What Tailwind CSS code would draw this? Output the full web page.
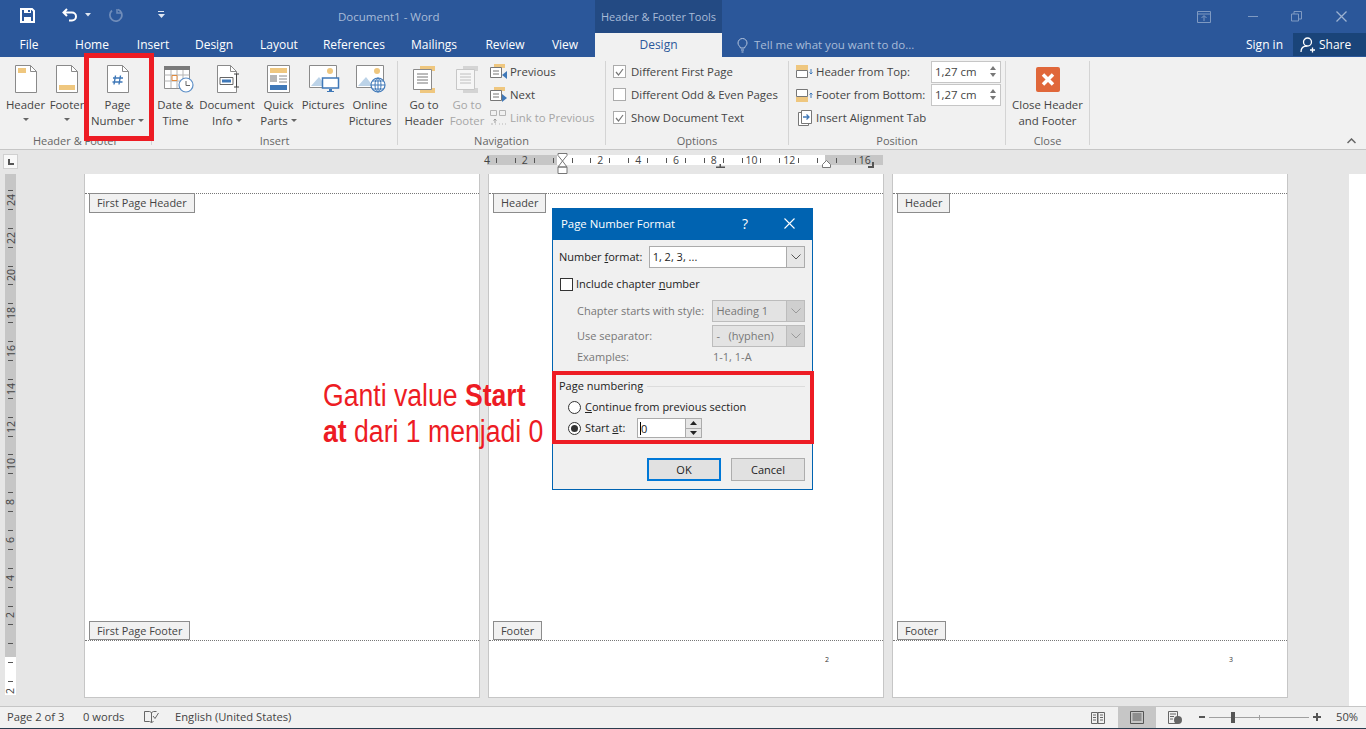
<!DOCTYPE html>
<html><head><meta charset="utf-8"><script src="https://cdn.jsdelivr.net/npm/@tailwindcss/browser@4"></script></head>
<body class="m-0 overflow-hidden">
<div class="relative w-[1366px] h-[729px] overflow-hidden flex flex-col bg-[#e6e6e6] font-['Open_Sans','Noto_Sans',sans-serif] text-[11.4px] leading-[16px] text-[#444]">

<!-- title bar -->
<div class="h-[33px] shrink-0 bg-[#2b579a] flex items-stretch text-[#a9bcd8]">
  <div class="w-[595px] flex items-center">
    <svg class="ml-[20px] mt-[-3px]" width="15" height="15" viewBox="0 0 15 15"><path d="M1 1h11l2 2v11H1z" fill="none" stroke="#fff" stroke-width="2"/><path d="M4 1h7v4H4zM4 9h7v5H4z" fill="#fff"/><path d="M8 2h2v2H8z" fill="#2b579a"/></svg>
    <svg class="ml-[27px] mt-[-3px]" width="17" height="14" viewBox="0 0 17 14"><path d="M5 1 1.500 4.500 5 8M2 4.500h8a4 4 0 0 1 4 4v0a4 4 0 0 1-4 4H7" fill="none" stroke="#fff" stroke-width="2"/></svg>
    <svg class="ml-[6px] mt-[-3px]" width="6" height="4" viewBox="0 0 6 4"><path d="M0 0h6L3 3.500z" fill="#dfe6f1"/></svg>
    <svg class="ml-[17px] mt-[-3px]" width="15" height="15" viewBox="0 0 15 15"><path d="M10 1.500 A6 6 0 1 1 4 2.500" fill="none" stroke="#6f8cb9" stroke-width="1.800"/><path d="M9 1v4h4" fill="none" stroke="#6f8cb9" stroke-width="1.500"/></svg>
    <svg class="ml-[35px] mt-[-3px]" width="7" height="8" viewBox="0 0 7 8"><path d="M0 0h6v1H0zM0 3h7L3.500 7z" fill="#dfe6f1"/></svg>
    <span class="ml-[173px] text-[11.500px] mt-[1px] whitespace-nowrap">Document1 - Word</span>
  </div>
  <div class="w-[127px] bg-[#234a83] flex items-center justify-center text-[11px] whitespace-nowrap">Header &amp; Footer Tools</div>
  <div class="flex-1 flex items-center text-[#7f9ac2]">
    <svg class="ml-[475px]" width="14" height="12" viewBox="0 0 14 12"><path d="M.5.500h13v11H.5zM.5 3h13M7 10V5M4.500 7 7 4.500 9.500 7" fill="none" stroke="#7f9ac2"/></svg>
    <div class="ml-[37px] w-[10px] h-[1px] bg-[#7f9ac2]"></div>
    <svg class="ml-[33px]" width="11" height="11" viewBox="0 0 11 11"><path d="M.5 3h7v7h-7zM3 3V.500h7.500V8H7.500" fill="none" stroke="#7f9ac2"/></svg>
    <svg class="ml-[34px]" width="11" height="11" viewBox="0 0 11 11"><path d="M.5.500l10 10M10.500.500l-10 10" stroke="#9db2d1" stroke-width="1.300"/></svg>
  </div>
</div>

<!-- tabs -->
<div class="h-[24px] shrink-0 bg-[#2b579a] flex items-center text-white text-[12px] whitespace-nowrap">
  <div class="w-[58px] text-center">File</div>
  <div class="w-[68px] text-center">Home</div>
  <div class="w-[54px] text-center">Insert</div>
  <div class="w-[68px] text-center">Design</div>
  <div class="w-[62px] text-center">Layout</div>
  <div class="w-[88px] text-center">References</div>
  <div class="w-[72px] text-center">Mailings</div>
  <div class="w-[70px] text-center">Review</div>
  <div class="w-[50px] text-center">View</div>
  <div class="w-[5px]"></div>
  <div class="w-[127px] h-full bg-[#f1f1f1] text-[#2b579a] flex items-center justify-center">Design</div>
  <svg class="ml-[15px]" width="11" height="15" viewBox="0 0 11 15"><path d="M3.500 10C3 8 1 7.500 1 5a4.500 4.500 0 0 1 9 0c0 2.500-2 3-2.500 5zM4 12h3M4.500 14h2" fill="none" stroke="#b6c6de"/></svg>
  <span class="ml-[6px] w-[492px] text-[#a9bcd8] text-[11.500px]">Tell me what you want to do...</span>
  <span>Sign in</span>
  <div class="ml-[10px] flex-1 h-[23px] self-start bg-[#1a4479] flex items-center">
    <svg class="ml-[7px]" width="16" height="16" viewBox="0 0 16 16"><circle cx="7.500" cy="5" r="4" fill="none" stroke="#fff" stroke-width="1.300"/><path d="M1 15c0-4 2.500-6 6-6M10 13h5M12.500 10.500v5" fill="none" stroke="#fff" stroke-width="1.300"/></svg>
    <span class="ml-[3px]">Share</span>
  </div>
</div>

<!-- ribbon -->
<div class="h-[93px] shrink-0 bg-[#f1f1f1] border-b border-[#c6c6c6] flex whitespace-nowrap">
  <!-- Header & Footer -->
  <div class="w-[152px] flex flex-col mt-[4px] h-[84px] border-r border-[#d4d4d4]">
    <div class="h-[74px] shrink-0 flex pl-[3px]">
      <div class="w-[45px] flex flex-col items-center">
        <div class="h-[36px] pt-[4px]"><svg width="22" height="28" viewBox="0 0 22 28"><path d="M.5.500h15l6 6v21H.5z" fill="#fff" stroke="#8a8a8a"/><path d="M15.500.500v6h6" fill="none" stroke="#8a8a8a"/><path d="M3 3h8v5H3z" fill="#efc77f"/></svg></div>
        <span>Header</span>
        <svg class="mt-[5px]" width="6" height="4" viewBox="0 0 6 4"><path d="M0 0h6L3 3z" fill="#666"/></svg>
      </div>
      <div class="w-[38px] flex flex-col items-center">
        <div class="h-[36px] pt-[4px]"><svg width="22" height="28" viewBox="0 0 22 28"><path d="M.5.500h15l6 6v21H.5z" fill="#fff" stroke="#8a8a8a"/><path d="M15.500.500v6h6" fill="none" stroke="#8a8a8a"/><path d="M3 20h16v5H3z" fill="#efc77f"/></svg></div>
        <span>Footer</span>
        <svg class="mt-[5px]" width="6" height="4" viewBox="0 0 6 4"><path d="M0 0h6L3 3z" fill="#666"/></svg>
      </div>
      <div class="w-[63px] flex flex-col items-center">
        <div class="h-[36px] pt-[4px]"><svg width="22" height="28" viewBox="0 0 22 28"><path d="M.5.500h15l6 6v21H.5z" fill="#fff" stroke="#8a8a8a"/><path d="M15.500.500v6h6" fill="none" stroke="#8a8a8a"/><path d="M8.500 10.500 7 19.500M13.500 10.500 12 19.500M6 13h10M5.500 17h10" stroke="#3f78b8" stroke-width="1.400" fill="none"/></svg></div>
        <span>Page</span>
        <span class="flex items-center">Number<svg class="ml-[3px]" width="6" height="4" viewBox="0 0 6 4"><path d="M0 0h6L3 3z" fill="#666"/></svg></span>
      </div>
    </div>
    <div class="shrink-0 text-center text-[#666] text-[11px] leading-[12px]">Header &amp; Footer</div>
  </div>
  <!-- Insert -->
  <div class="w-[246px] flex flex-col mt-[4px] h-[84px] border-r border-[#d4d4d4]">
    <div class="h-[74px] shrink-0 flex">
      <div class="w-[47px] flex flex-col items-center">
        <div class="h-[36px] pt-[5px] pl-[7px]"><svg width="30" height="27" viewBox="0 0 30 27"><path d="M.5 2.500h25v20H.5z" fill="#fff" stroke="#8f8f8f"/><path d="M0 0h26v4H0z" fill="#7a7a7a"/><path d="M.5 9h25M.5 15h25M7 4v18M13 4v18M19 4v18" stroke="#b5b5b5" fill="none"/><path d="M8 9.500h5v5H8z" fill="#fff" stroke="#e0893c"/><circle cx="22" cy="19" r="7" fill="#fff" stroke="#5d8fc7" stroke-width="1.200"/><path d="M22 15v4.500h4" fill="none" stroke="#666"/></svg></div>
        <span>Date &amp;</span><span>Time</span>
      </div>
      <div class="w-[56px] flex flex-col items-center">
        <div class="h-[36px] pt-[4px] pl-[4px]"><svg width="24" height="28" viewBox="0 0 24 28"><path d="M.5.500h13l6 6v21H.5z" fill="#fff" stroke="#8a8a8a"/><path d="M13.500.500v6h6" fill="none" stroke="#8a8a8a"/><path d="M3 12.500h13v7H3z" fill="#fff" stroke="#666"/><path d="M5 14.500h9v3H5z" fill="#3f78b8"/><path d="M17 9h5M19.500 9v13M17 22h5" stroke="#444" fill="none"/></svg></div>
        <span>Document</span>
        <span class="flex items-center">Info<svg class="ml-[3px]" width="6" height="4" viewBox="0 0 6 4"><path d="M0 0h6L3 3z" fill="#666"/></svg></span>
      </div>
      <div class="w-[47px] flex flex-col items-center">
        <div class="h-[36px] pt-[4px]"><svg width="23" height="28" viewBox="0 0 23 28"><path d="M.5.500h22v27H.5z" fill="#fff" stroke="#8a8a8a"/><path d="M3 3h17v5H3z" fill="#efc77f"/><path d="M3 10h7v7H3z" fill="#b5b5b5"/><path d="M12 11h8M12 14h8M12 17h8" stroke="#8a8a8a"/><path d="M3 20h17v5H3z" fill="#3f78b8"/></svg></div>
        <span>Quick</span>
        <span class="flex items-center">Parts<svg class="ml-[3px]" width="6" height="4" viewBox="0 0 6 4"><path d="M0 0h6L3 3z" fill="#666"/></svg></span>
      </div>
      <div class="w-[42px] flex flex-col items-center">
        <div class="h-[36px] pt-[4px] pl-[2px]"><svg width="31" height="29" viewBox="0 0 31 29"><path d="M.5.500h27v22H.5z" fill="#fff" stroke="#8a8a8a"/><circle cx="21" cy="6" r="3" fill="#efc77f"/><path d="M2 21l8-9 7 9z" fill="#bcd3e8"/><path d="M13.500 13h16v10h-16z" fill="#fff" stroke="#3f78b8" stroke-width="1.500"/><path d="M20 24h3v2h2v1h-7v-1h2z" fill="#3f78b8"/></svg></div>
        <span>Pictures</span>
      </div>
      <div class="w-[52px] flex flex-col items-center">
        <div class="h-[36px] pt-[4px] pl-[2px]"><svg width="31" height="29" viewBox="0 0 31 29"><path d="M.5.500h27v22H.5z" fill="#fff" stroke="#8a8a8a"/><circle cx="21" cy="6" r="3" fill="#efc77f"/><path d="M2 21l8-9 7 9z" fill="#bcd3e8"/><circle cx="22" cy="20" r="7" fill="#fff" stroke="#3f78b8" stroke-width="1.200"/><path d="M15 20h14M22 13v14M17 16h10M17 24h10" stroke="#3f78b8" fill="none"/><ellipse cx="22" cy="20" rx="3" ry="7" fill="none" stroke="#3f78b8"/></svg></div>
        <span>Online</span><span>Pictures</span>
      </div>
    </div>
    <div class="shrink-0 text-center text-[#666] text-[11px] leading-[12px]">Insert</div>
  </div>
  <!-- Navigation -->
  <div class="w-[208px] flex flex-col mt-[4px] h-[84px] border-r border-[#d4d4d4]">
    <div class="h-[74px] shrink-0 flex pl-[4px]">
      <div class="w-[44px] flex flex-col items-center">
        <div class="h-[36px] pt-[4px]"><svg width="24" height="29" viewBox="0 0 24 29"><path d="M8 1h15v5H8zM8 23h15v5H8z" fill="#efc77f"/><path d="M1.500 4.500h18v20h-18z" fill="#fff" stroke="#8a8a8a"/><path d="M5 9h11M5 12h11M5 15h11M5 18h11" stroke="#777"/></svg></div>
        <span>Go to</span><span>Header</span>
      </div>
      <div class="w-[42px] flex flex-col items-center text-[#a6a6a6]">
        <div class="h-[36px] pt-[4px]"><svg class="opacity-40" width="24" height="29" viewBox="0 0 24 29"><path d="M8 1h15v5H8zM8 23h15v5H8z" fill="#aaa"/><path d="M1.500 4.500h18v20h-18z" fill="#fff" stroke="#8a8a8a"/><path d="M5 9h11M5 12h11M5 15h11M5 18h11" stroke="#777"/></svg></div>
        <span>Go to</span><span>Footer</span>
      </div>
      <div class="ml-[2px] mt-[-1px] flex flex-col">
        <div class="h-[23px] flex items-center"><svg width="17" height="16" viewBox="0 0 17 16"><path d="M4 0h11v4H4z" fill="#efc77f"/><path d="M.5 3.500h11v10H.5z" fill="#fff" stroke="#777"/><path d="M3 7h6M3 10h6" stroke="#777"/><path d="M17 7v8l-5-4z" fill="#3f78b8"/></svg><span class="ml-[3px]">Previous</span></div>
        <div class="h-[23px] flex items-center"><svg width="17" height="16" viewBox="0 0 17 16"><path d="M4 0h11v4H4z" fill="#efc77f"/><path d="M.5 3.500h11v10H.5z" fill="#fff" stroke="#777"/><path d="M3 7h6M3 10h6" stroke="#777"/><path d="M12 7v8l5-4z" fill="#3f78b8"/></svg><span class="ml-[3px]">Next</span></div>
        <div class="h-[23px] flex items-center text-[#a6a6a6]"><svg width="17" height="16" viewBox="0 0 17 16"><path d="M.5.500h6v5h-6zM9.500.500h6v5h-6zM1 14h2M5 14h1M9 14h1M12 14h1M15 14h1" fill="none" stroke="#b5b5b5"/><path d="M5 13V9M3.500 10.500 5 9l1.500 1.500" fill="none" stroke="#999"/></svg><span class="ml-[3px]">Link to Previous</span></div>
      </div>
    </div>
    <div class="shrink-0 text-center text-[#666] text-[11px] leading-[12px]">Navigation</div>
  </div>
  <!-- Options -->
  <div class="w-[183px] flex flex-col mt-[4px] h-[84px] border-r border-[#d4d4d4]">
    <div class="h-[74px] shrink-0 pl-[7px] flex flex-col">
      <div class="mt-[-1px] h-[23px] flex items-center"><div class="w-[13px] h-[13px] bg-white border border-[#ababab] flex items-center justify-center"><svg width="9" height="8" viewBox="0 0 9 8"><path d="M1 4l2.500 3L8 1" fill="none" stroke="#777" stroke-width="1.200"/></svg></div><span class="ml-[5px]">Different First Page</span></div>
      <div class="h-[23px] flex items-center"><div class="w-[13px] h-[13px] bg-white border border-[#ababab]"></div><span class="ml-[5px]">Different Odd &amp; Even Pages</span></div>
      <div class="h-[23px] flex items-center"><div class="w-[13px] h-[13px] bg-white border border-[#ababab] flex items-center justify-center"><svg width="9" height="8" viewBox="0 0 9 8"><path d="M1 4l2.500 3L8 1" fill="none" stroke="#777" stroke-width="1.200"/></svg></div><span class="ml-[5px]">Show Document Text</span></div>
    </div>
    <div class="shrink-0 text-center text-[#666] text-[11px] leading-[12px]">Options</div>
  </div>
  <!-- Position -->
  <div class="w-[217px] flex flex-col mt-[4px] h-[84px] border-r border-[#d4d4d4]">
    <div class="h-[74px] shrink-0 pl-[7px] flex flex-col">
      <div class="mt-[-1px] h-[23px] flex items-center">
        <svg width="17" height="16" viewBox="0 0 17 16"><path d="M0 1h12v5H0z" fill="#efc77f"/><path d="M.5 6.500h11v7H.5z" fill="#fff" stroke="#777"/><path d="M15 5v5M13.500 8.500 15 10l1.500-1.500" fill="none" stroke="#3f78b8"/></svg>
        <span class="ml-[3px] w-[115px]">Header from Top:</span>
        <div class="w-[70px] h-[22px] bg-white border border-[#c6c6c6] flex items-center justify-between pl-[3px] pr-[4px]"><span>1,27 cm</span><div class="flex flex-col gap-[3px]"><svg width="6" height="4" viewBox="0 0 6 4"><path d="M3 0l3 4H0z" fill="#777"/></svg><svg width="6" height="4" viewBox="0 0 6 4"><path d="M0 0h6L3 4z" fill="#777"/></svg></div></div>
      </div>
      <div class="h-[23px] flex items-center">
        <svg width="17" height="16" viewBox="0 0 17 16"><path d="M.5 2.500h11v7H.5z" fill="#fff" stroke="#777"/><path d="M0 10h12v5H0z" fill="#efc77f"/><path d="M15 11V6M13.500 7.500 15 6l1.500 1.500" fill="none" stroke="#3f78b8"/></svg>
        <span class="ml-[3px] w-[115px]">Footer from Bottom:</span>
        <div class="w-[70px] h-[22px] bg-white border border-[#c6c6c6] flex items-center justify-between pl-[3px] pr-[4px]"><span>1,27 cm</span><div class="flex flex-col gap-[3px]"><svg width="6" height="4" viewBox="0 0 6 4"><path d="M3 0l3 4H0z" fill="#777"/></svg><svg width="6" height="4" viewBox="0 0 6 4"><path d="M0 0h6L3 4z" fill="#777"/></svg></div></div>
      </div>
      <div class="h-[23px] flex items-center">
        <svg class="ml-[2px]" width="15" height="16" viewBox="0 0 15 16"><path d="M.5 2.500h10v13H.5z" fill="#fff" stroke="#777"/><path d="M3.500.500h10v13h-10z" fill="#fff" stroke="#777"/><path d="M5 7h6M8.500 4.500 11 7 8.500 9.500" fill="none" stroke="#3f78b8" stroke-width="1.300"/></svg>
        <span class="ml-[3px]">Insert Alignment Tab</span>
      </div>
    </div>
    <div class="shrink-0 text-center text-[#666] text-[11px] leading-[12px]">Position</div>
  </div>
  <!-- Close -->
  <div class="w-[84px] flex flex-col mt-[4px] h-[84px] border-r border-[#d4d4d4]">
    <div class="h-[74px] shrink-0 flex flex-col items-center">
      <div class="h-[36px] pt-[6px]"><svg width="24" height="25" viewBox="0 0 24 25"><rect width="24" height="25" rx="2" fill="#e0673a"/><path d="M7 7.500l10 10M17 7.500l-10 10" stroke="#fff" stroke-width="3.500"/></svg></div>
      <span>Close Header</span><span>and Footer</span>
    </div>
    <div class="shrink-0 text-center text-[#666] text-[11px] leading-[12px]">Close</div>
  </div>
  <svg class="ml-[257px] mt-[81px]" width="9" height="6" viewBox="0 0 9 6"><path d="M.5 5l4-4 4 4" fill="none" stroke="#666" stroke-width="1.500"/></svg>
</div>

<!-- horizontal ruler -->
<div class="h-[24px] shrink-0 flex items-start bg-[#e6e6e6]">
  <div class="ml-[3px] mt-[4px] w-[15px] h-[15px] bg-[#f8f8f8] border border-[#d0d0d0] flex items-center justify-center"><div class="w-[6px] h-[6px] border-l-2 border-b-2 border-[#555]"></div></div>
  <div class="relative ml-[469px] mt-[5px] h-[10px] w-[396px] flex items-center text-[10.500px] leading-[10px] text-[#444] bg-[linear-gradient(to_right,#c6c6c6_70px,#fff_70px,#fff_338px,#c6c6c6_338px)]">
    <div class="w-0 flex justify-center"><span>4</span></div>
    <div class="w-[18.900px] flex justify-center"><div class="w-px h-[5px] bg-[#555]"></div></div><div class="w-[18.900px] flex justify-center"><div class="w-px h-[5px] bg-[#555]"></div></div>
    <div class="w-0 flex justify-center"><span>2</span></div>
    <div class="w-[18.900px] flex justify-center"><div class="w-px h-[5px] bg-[#555]"></div></div><div class="w-[18.900px] flex justify-center"><div class="w-px h-[5px] bg-[#555]"></div></div>
    <div class="w-[18.900px] flex justify-center"><div class="w-px h-[5px] bg-[#555]"></div></div><div class="w-[18.900px] flex justify-center"><div class="w-px h-[5px] bg-[#555]"></div></div>
    <div class="w-0 flex justify-center"><span>2</span></div>
    <div class="w-[18.900px] flex justify-center"><div class="w-px h-[5px] bg-[#555]"></div></div><div class="w-[18.900px] flex justify-center"><div class="w-px h-[5px] bg-[#555]"></div></div>
    <div class="w-0 flex justify-center"><span>4</span></div>
    <div class="w-[18.900px] flex justify-center"><div class="w-px h-[5px] bg-[#555]"></div></div><div class="w-[18.900px] flex justify-center"><div class="w-px h-[5px] bg-[#555]"></div></div>
    <div class="w-0 flex justify-center"><span>6</span></div>
    <div class="w-[18.900px] flex justify-center"><div class="w-px h-[5px] bg-[#555]"></div></div><div class="w-[18.900px] flex justify-center"><div class="w-px h-[5px] bg-[#555]"></div></div>
    <div class="w-0 flex justify-center"><span>8</span></div>
    <div class="w-[18.900px] flex justify-center"><div class="w-px h-[5px] bg-[#555]"></div></div><div class="w-[18.900px] flex justify-center"><div class="w-px h-[5px] bg-[#555]"></div></div>
    <div class="w-0 flex justify-center"><span>10</span></div>
    <div class="w-[18.900px] flex justify-center"><div class="w-px h-[5px] bg-[#555]"></div></div><div class="w-[18.900px] flex justify-center"><div class="w-px h-[5px] bg-[#555]"></div></div>
    <div class="w-0 flex justify-center"><span>12</span></div>
    <div class="w-[18.900px] flex justify-center"><div class="w-px h-[5px] bg-[#555]"></div></div><div class="w-[18.900px] flex justify-center"><div class="w-px h-[5px] bg-[#555]"></div></div>
    <div class="w-0"></div>
    <div class="w-[18.900px] flex justify-center"><div class="w-px h-[5px] bg-[#555]"></div></div><div class="w-[18.900px] flex justify-center"><div class="w-px h-[5px] bg-[#555]"></div></div>
    <div class="w-0 flex justify-center"><span>16</span></div>
    <!-- indent markers -->
    <svg class="absolute left-[70px] top-[-2px]" width="11" height="21" viewBox="0 0 11 21"><path d="M1 .5h9v2L5.500 8 1 2.500zM1 14 5.500 8 10 14zM1 14h9v6.500H1z" fill="#fff" stroke="#777"/></svg>
    <svg class="absolute left-[335px] top-[5px]" width="9" height="8" viewBox="0 0 9 8"><path d="M.5 7.500v-3l4-4 4 4v3z" fill="#fff" stroke="#777"/></svg>
    <svg class="absolute left-[229px] top-[9px]" width="9" height="4" viewBox="0 0 9 4"><path d="M0 2.500h9V4H0zM3.500 0H5v3H3.500z" fill="#555"/></svg>
    <svg class="absolute left-[381px] top-[7px]" width="6" height="6" viewBox="0 0 6 6"><path d="M4 0h2v6H0V4h4z" fill="#555"/></svg>
  </div>
</div>

<!-- document area -->
<div class="h-[532px] shrink-0 flex items-start">
  <!-- vertical ruler -->
  <div class="ml-[5px] w-[11px] h-[521px] pt-[7px] flex flex-col items-center text-[10.500px] leading-[10px] text-[#444] bg-[linear-gradient(to_bottom,#c6c6c6_483px,#fff_483px)]">
    <div class="h-[18.900px] flex items-center"><div class="w-[5px] h-px bg-[#555]"></div></div>
    <div class="h-0 flex items-center"><span class="-rotate-90">24</span></div>
    <div class="h-[18.900px] flex items-center"><div class="w-[5px] h-px bg-[#555]"></div></div><div class="h-[18.900px] flex items-center"><div class="w-[5px] h-px bg-[#555]"></div></div>
    <div class="h-0 flex items-center"><span class="-rotate-90">22</span></div>
    <div class="h-[18.900px] flex items-center"><div class="w-[5px] h-px bg-[#555]"></div></div><div class="h-[18.900px] flex items-center"><div class="w-[5px] h-px bg-[#555]"></div></div>
    <div class="h-0 flex items-center"><span class="-rotate-90">20</span></div>
    <div class="h-[18.900px] flex items-center"><div class="w-[5px] h-px bg-[#555]"></div></div><div class="h-[18.900px] flex items-center"><div class="w-[5px] h-px bg-[#555]"></div></div>
    <div class="h-0 flex items-center"><span class="-rotate-90">18</span></div>
    <div class="h-[18.900px] flex items-center"><div class="w-[5px] h-px bg-[#555]"></div></div><div class="h-[18.900px] flex items-center"><div class="w-[5px] h-px bg-[#555]"></div></div>
    <div class="h-0 flex items-center"><span class="-rotate-90">16</span></div>
    <div class="h-[18.900px] flex items-center"><div class="w-[5px] h-px bg-[#555]"></div></div><div class="h-[18.900px] flex items-center"><div class="w-[5px] h-px bg-[#555]"></div></div>
    <div class="h-0 flex items-center"><span class="-rotate-90">14</span></div>
    <div class="h-[18.900px] flex items-center"><div class="w-[5px] h-px bg-[#555]"></div></div><div class="h-[18.900px] flex items-center"><div class="w-[5px] h-px bg-[#555]"></div></div>
    <div class="h-0 flex items-center"><span class="-rotate-90">12</span></div>
    <div class="h-[18.900px] flex items-center"><div class="w-[5px] h-px bg-[#555]"></div></div><div class="h-[18.900px] flex items-center"><div class="w-[5px] h-px bg-[#555]"></div></div>
    <div class="h-0 flex items-center"><span class="-rotate-90">10</span></div>
    <div class="h-[18.900px] flex items-center"><div class="w-[5px] h-px bg-[#555]"></div></div><div class="h-[18.900px] flex items-center"><div class="w-[5px] h-px bg-[#555]"></div></div>
    <div class="h-0 flex items-center"><span class="-rotate-90">8</span></div>
    <div class="h-[18.900px] flex items-center"><div class="w-[5px] h-px bg-[#555]"></div></div><div class="h-[18.900px] flex items-center"><div class="w-[5px] h-px bg-[#555]"></div></div>
    <div class="h-0 flex items-center"><span class="-rotate-90">6</span></div>
    <div class="h-[18.900px] flex items-center"><div class="w-[5px] h-px bg-[#555]"></div></div><div class="h-[18.900px] flex items-center"><div class="w-[5px] h-px bg-[#555]"></div></div>
    <div class="h-0 flex items-center"><span class="-rotate-90">4</span></div>
    <div class="h-[18.900px] flex items-center"><div class="w-[5px] h-px bg-[#555]"></div></div><div class="h-[18.900px] flex items-center"><div class="w-[5px] h-px bg-[#555]"></div></div>
    <div class="h-0 flex items-center"><span class="-rotate-90">2</span></div>
    <div class="h-[18.900px] flex items-center"><div class="w-[5px] h-px bg-[#555]"></div></div><div class="h-[18.900px] flex items-center"><div class="w-[5px] h-px bg-[#555]"></div></div>
    <div class="h-[18.900px] flex items-center"><div class="w-[5px] h-px bg-[#555]"></div></div><div class="h-[18.900px] flex items-center"><div class="w-[5px] h-px bg-[#555]"></div></div>
    <div class="h-0 flex items-center"><span class="-rotate-90">2</span></div>
  </div>

  <!-- pages -->
  <div class="ml-[68px] flex gap-[8px]">
    <div class="w-[396px] h-[524px] bg-white border-x border-b border-[#c6c6c6] flex flex-col text-[10.900px]">
      <div class="h-[20px] shrink-0 border-b border-dotted border-[#777]"></div>
      <div class="ml-[4px] mt-[-1px] h-[20px] w-fit px-[7px] bg-[#f1f1f1] border border-[#8c8c8c] flex items-center">First Page Header</div>
      <div class="flex-1"></div>
      <div class="ml-[4px] h-[19px] w-fit px-[7px] bg-[#f1f1f1] border border-[#8c8c8c] flex items-center">First Page Footer</div>
      <div class="h-[57px] shrink-0 border-t border-dotted border-[#777]"></div>
    </div>
    <div class="w-[396px] h-[524px] bg-white border-x border-b border-[#c6c6c6] flex flex-col text-[10.900px]">
      <div class="h-[20px] shrink-0 border-b border-dotted border-[#777]"></div>
      <div class="ml-[4px] mt-[-1px] h-[20px] w-fit px-[7px] bg-[#f1f1f1] border border-[#8c8c8c] flex items-center">Header</div>
      <div class="flex-1"></div>
      <div class="ml-[4px] h-[19px] w-fit px-[7px] bg-[#f1f1f1] border border-[#8c8c8c] flex items-center">Footer</div>
      <div class="h-[57px] shrink-0 border-t border-dotted border-[#777] pl-[336px] pt-[16px] text-[7px] leading-[6px] text-[#333]">2</div>
    </div>
    <div class="w-[396px] h-[524px] bg-white border-x border-b border-[#c6c6c6] flex flex-col text-[10.900px]">
      <div class="h-[20px] shrink-0 border-b border-dotted border-[#777]"></div>
      <div class="ml-[4px] mt-[-1px] h-[20px] w-fit px-[7px] bg-[#f1f1f1] border border-[#8c8c8c] flex items-center">Header</div>
      <div class="flex-1"></div>
      <div class="ml-[4px] h-[19px] w-fit px-[7px] bg-[#f1f1f1] border border-[#8c8c8c] flex items-center">Footer</div>
      <div class="h-[57px] shrink-0 border-t border-dotted border-[#777] pl-[336px] pt-[16px] text-[7px] leading-[6px] text-[#333]">3</div>
    </div>
  </div>
  <div class="ml-auto w-[17px] h-full bg-white"></div>
</div>

<!-- status bar -->
<div class="h-[23px] shrink-0 bg-[#f1f1f1] border-t border-b border-t-[#c6c6c6] border-b-[#2b3d4f] pb-[1px] flex items-center text-[11.200px] whitespace-nowrap">
  <span class="ml-[7px] w-[76px]">Page 2 of 3</span>
  <span class="w-[61px]">0 words</span>
  <svg width="15" height="14" viewBox="0 0 15 14"><path d="M.5 1.500h5l2 1v10l-2-1h-5zM7.500 2.500l2-1h3M7.500 12.500l2-1" fill="none" stroke="#666"/><path d="M9 6l2 2.500L14.500 3" fill="none" stroke="#666"/></svg>
  <span class="ml-[16px] w-[916px]">English (United States)</span>
  <svg width="14" height="13" viewBox="0 0 14 13"><path d="M.5 1.500h6v11h-6zM7 1.500h6.500v11H7z" fill="none" stroke="#666"/><path d="M2 4h3M2 6.500h3M2 9h3M9 4h3M9 6.500h3M9 9h3" stroke="#666"/></svg>
  <div class="ml-[13px] w-[38px] h-[21px] bg-[#c6c6c6] flex items-center justify-center"><svg width="14" height="13" viewBox="0 0 14 13"><path d="M.5.500h13v12H.5z" fill="none" stroke="#555"/><path d="M2.500 3h9M2.500 5h9M2.500 7h9M2.500 9h9" stroke="#555"/></svg></div>
  <svg class="ml-[12px]" width="14" height="13" viewBox="0 0 14 13"><path d="M.5.500h9v12h-9z" fill="none" stroke="#666"/><path d="M2 3h6M2 5.500h4M2 8h3" stroke="#666"/><circle cx="10" cy="9" r="4" fill="#666"/></svg>
  <div class="ml-[17px] w-[6px] h-[2px] bg-[#555]"></div>
  <div class="ml-[4px] w-[100px] h-px bg-[#a0a0a0] flex items-center">
    <div class="ml-[22px] w-[4px] h-[11px] bg-[#555]"></div>
    <div class="ml-[24px] w-px h-[5px] bg-[#a0a0a0]"></div>
  </div>
  <svg class="ml-[4px]" width="8" height="8" viewBox="0 0 8 8"><path d="M0 4h8M4 0v8" stroke="#555" stroke-width="2"/></svg>
  <span class="ml-[15px]">50%</span>
</div>

<!-- dialog -->
<div class="absolute left-[552px] top-[208px] w-[261px] h-[282px] bg-[#f0f0f0] border border-[#0063b1] flex flex-col text-[11px] text-[#222] whitespace-nowrap">
  <div class="h-[31px] shrink-0 bg-[#0063b1] text-white text-[11.400px] pb-[2px] flex items-center pl-[8px]">
    <span class="w-[181px]">Page Number Format</span>
    <span class="text-[14px]">?</span>
    <svg class="ml-[36px]" width="11" height="11" viewBox="0 0 11 11"><path d="M.5.500l10 10M10.500.500l-10 10" stroke="#fff" stroke-width="1.100"/></svg>
  </div>
  <div class="pl-[6px] pr-[7px] flex flex-col">
    <div class="mt-[6px] h-[22px] flex items-center">
      <span class="w-[90px]">Number <u>f</u>ormat:</span>
      <div class="w-[157px] h-[22px] bg-white border border-[#ababab] flex items-center justify-between pl-[3px]"><span>1, 2, 3, ...</span><div class="w-[18px] h-full bg-[#e6e6e6] border-l border-[#ababab] flex items-center justify-center"><svg width="10" height="6" viewBox="0 0 10 6"><path d="M.5.500 5 5 9.500.500" fill="none" stroke="#555"/></svg></div></div>
    </div>
    <div class="mt-[8px] h-[16px] flex items-center">
      <div class="w-[13px] h-[13px] bg-white border border-[#333] ml-px"></div><span class="ml-[3px]">Include chapter <u>n</u>umber</span>
    </div>
    <div class="mt-[8px] h-[22px] flex items-center text-[#777]">
      <span class="ml-[18px] w-[136px]">Chapter starts with style:</span>
      <div class="w-[93px] h-[22px] bg-[#e3e3e3] border border-[#bcbcbc] flex items-center justify-between pl-[3px]"><span>Heading 1</span><div class="w-[18px] h-full bg-[#cfcfcf] border-l border-[#bcbcbc] flex items-center justify-center"><svg width="10" height="6" viewBox="0 0 10 6"><path d="M.5.500 5 5 9.500.500" fill="none" stroke="#999"/></svg></div></div>
    </div>
    <div class="mt-[3px] h-[22px] flex items-center text-[#777]">
      <span class="ml-[18px] w-[136px]">Use separator:</span>
      <div class="w-[93px] h-[22px] bg-[#e3e3e3] border border-[#bcbcbc] flex items-center justify-between pl-[3px]"><span>-&nbsp;&nbsp;&nbsp;(hyphen)</span><div class="w-[18px] h-full bg-[#cfcfcf] border-l border-[#bcbcbc] flex items-center justify-center"><svg width="10" height="6" viewBox="0 0 10 6"><path d="M.5.500 5 5 9.500.500" fill="none" stroke="#999"/></svg></div></div>
    </div>
    <div class="mt-[2px] h-[16px] flex items-center text-[#777]">
      <span class="ml-[18px] w-[136px]">Examples:</span><span>1-1, 1-A</span>
    </div>
    <div class="mt-[13px] h-[16px] flex items-center">
      <span>Page numbering</span><div class="ml-[4px] flex-1 h-px bg-[#dcdcdc]"></div>
    </div>
    <div class="mt-[5px] h-[16px] flex items-center">
      <div class="ml-[9px] w-[13px] h-[13px] rounded-full bg-white border border-[#333]"></div><span class="ml-[4px]"><u>C</u>ontinue from previous section</span>
    </div>
    <div class="mt-[3px] h-[20px] flex items-center">
      <div class="ml-[9px] w-[13px] h-[13px] rounded-full bg-white border border-[#333] flex items-center justify-center"><div class="w-[7px] h-[7px] rounded-full bg-[#333]"></div></div>
      <span class="ml-[4px] w-[52px]">Start <u>a</u>t:</span>
      <div class="w-[65px] h-[20px] bg-white border border-[#ababab] flex items-center justify-between pl-[2px]">
        <span class="border-l border-[#000] leading-[13px]">0</span>
        <div class="w-[16px] h-full flex flex-col border-l border-[#ababab]">
          <div class="flex-1 bg-[#e6e6e6] border-b border-[#ababab] flex items-center justify-center"><svg width="7" height="4" viewBox="0 0 7 4"><path d="M3.500 0 7 4H0z" fill="#222"/></svg></div>
          <div class="flex-1 bg-[#e6e6e6] flex items-center justify-center"><svg width="7" height="4" viewBox="0 0 7 4"><path d="M0 0h7L3.500 4z" fill="#222"/></svg></div>
        </div>
      </div>
    </div>
    <div class="mt-[20px] flex justify-end gap-[10px]">
      <div class="w-[74px] h-[23px] bg-[#e1e1e1] border-2 border-[#0078d7] flex items-center justify-center">OK</div>
      <div class="w-[74px] h-[23px] bg-[#e1e1e1] border border-[#adadad] flex items-center justify-center">Cancel</div>
    </div>
  </div>
</div>

<!-- annotations -->
<div class="absolute left-[84px] top-[53px] w-[70px] h-[88px] border-[5px] border-[#ed1c24]"></div>
<div class="absolute left-[552px] top-[371px] w-[262px] h-[73px] border-[4px] border-[#ed1c24]"></div>
<div class="absolute left-[323px] top-[378px] origin-left scale-x-[0.858] font-['Liberation_Sans',sans-serif] text-[31px] leading-[36px] text-[#ed1c24] whitespace-nowrap">Ganti value <b>Start</b><br><b>at</b> dari 1 menjadi 0</div>

</div>
</body></html>
